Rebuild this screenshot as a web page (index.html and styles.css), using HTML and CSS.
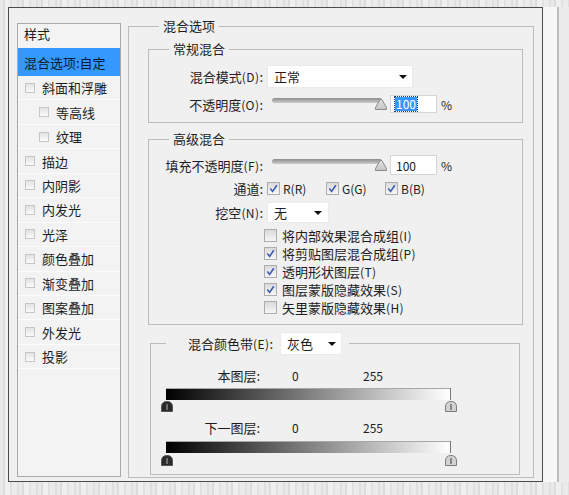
FILE: index.html
```html
<!DOCTYPE html>
<html lang="zh-CN">
<head>
<meta charset="utf-8">
<title>图层样式</title>
<link rel="stylesheet" href="styles.css">
</head>
<body>
<div class="screen">
  <div class="dialog">
    <ul class="styles-list">
      <li class="list-head">样式</li>
      <li class="list-item selected">混合选项:自定</li>
      <li class="list-item"><span class="lbox"></span>斜面和浮雕</li>
      <li class="list-item sub"><span class="lbox"></span>等高线</li>
      <li class="list-item sub"><span class="lbox"></span>纹理</li>
      <li class="list-item"><span class="lbox"></span>描边</li>
      <li class="list-item"><span class="lbox"></span>内阴影</li>
      <li class="list-item"><span class="lbox"></span>内发光</li>
      <li class="list-item"><span class="lbox"></span>光泽</li>
      <li class="list-item"><span class="lbox"></span>颜色叠加</li>
      <li class="list-item"><span class="lbox"></span>渐变叠加</li>
      <li class="list-item"><span class="lbox"></span>图案叠加</li>
      <li class="list-item"><span class="lbox"></span>外发光</li>
      <li class="list-item"><span class="lbox"></span>投影</li>
    </ul>

    <fieldset class="group outer">
      <legend>混合选项</legend>

      <fieldset class="group general">
        <legend>常规混合</legend>
        <div class="form-row row-mode">
          <label class="flabel">混合模式<span class="k">(D)</span>:</label>
          <div class="select sel-mode"><span>正常</span><i class="caret"></i></div>
        </div>
        <div class="form-row row-opacity">
          <label class="flabel">不透明度<span class="k">(O)</span>:</label>
          <div class="slider">
            <div class="track"></div>
            <svg class="thumb" width="12" height="12" viewBox="0 0 12 12"><defs><linearGradient id="tg1" x1="0" y1="0" x2="0" y2="1"><stop offset="0" stop-color="#e4e4e4"/><stop offset="1" stop-color="#c4c4c4"/></linearGradient></defs><path d="M0.5 11.5 L0.5 9.5 L5 1.8 Q6 0.4 7 1.8 L11.5 9.5 L11.5 11.5 Z" fill="url(#tg1)" stroke="#8a8a8a"/></svg>
          </div>
          <div class="num"><span class="hl">100</span></div>
          <span class="pct">%</span>
        </div>
      </fieldset>

      <fieldset class="group advanced">
        <legend>高级混合</legend>
        <div class="form-row row-fill">
          <label class="flabel">填充不透明度<span class="k">(F)</span>:</label>
          <div class="slider">
            <div class="track"></div>
            <svg class="thumb" width="12" height="12" viewBox="0 0 12 12"><path d="M0.5 11.5 L0.5 9.5 L5 1.8 Q6 0.4 7 1.8 L11.5 9.5 L11.5 11.5 Z" fill="url(#tg1)" stroke="#8a8a8a"/></svg>
          </div>
          <div class="num num-fill">100</div>
          <span class="pct">%</span>
        </div>
        <div class="form-row row-channels">
          <label class="flabel">通道:</label>
          <div class="chan"><span class="cb checked"><svg width="11" height="11" viewBox="0 0 11 11"><path d="M2.3 5.6 L4.6 8.4 L8.8 2.3" fill="none" stroke="#3d5cb4" stroke-width="1.6"/></svg></span><span class="latin">R(R)</span></div>
          <div class="chan"><span class="cb checked"><svg width="11" height="11" viewBox="0 0 11 11"><path d="M2.3 5.6 L4.6 8.4 L8.8 2.3" fill="none" stroke="#3d5cb4" stroke-width="1.6"/></svg></span><span class="latin">G(G)</span></div>
          <div class="chan"><span class="cb checked"><svg width="11" height="11" viewBox="0 0 11 11"><path d="M2.3 5.6 L4.6 8.4 L8.8 2.3" fill="none" stroke="#3d5cb4" stroke-width="1.6"/></svg></span><span class="latin">B(B)</span></div>
        </div>
        <div class="form-row row-knock">
          <label class="flabel">挖空<span class="k">(N)</span>:</label>
          <div class="select sel-knock"><span>无</span><i class="caret"></i></div>
        </div>
        <ul class="opts">
          <li class="opt"><span class="cb"></span>将内部效果混合成组<span class="k">(I)</span></li>
          <li class="opt"><span class="cb checked"><svg width="11" height="11" viewBox="0 0 11 11"><path d="M2.3 5.6 L4.6 8.4 L8.8 2.3" fill="none" stroke="#3d5cb4" stroke-width="1.6"/></svg></span>将剪贴图层混合成组<span class="k">(P)</span></li>
          <li class="opt"><span class="cb checked"><svg width="11" height="11" viewBox="0 0 11 11"><path d="M2.3 5.6 L4.6 8.4 L8.8 2.3" fill="none" stroke="#3d5cb4" stroke-width="1.6"/></svg></span>透明形状图层<span class="k">(T)</span></li>
          <li class="opt"><span class="cb checked"><svg width="11" height="11" viewBox="0 0 11 11"><path d="M2.3 5.6 L4.6 8.4 L8.8 2.3" fill="none" stroke="#3d5cb4" stroke-width="1.6"/></svg></span>图层蒙版隐藏效果<span class="k">(S)</span></li>
          <li class="opt"><span class="cb"></span>矢里蒙版隐藏效果<span class="k">(H)</span></li>
        </ul>
      </fieldset>

      <fieldset class="group band">
        <legend class="band-legend">
          <span class="band-label">混合颜色带<span class="k">(E)</span>:</span>
          <span class="select sel-band"><span>灰色</span><i class="caret"></i></span>
        </legend>
        <div class="band-row">
          <span class="blabel">本图层:</span>
          <span class="v0">0</span>
          <span class="v255">255</span>
        </div>
        <div class="ramp">
          <div class="bar"></div>
          <div class="stops">
            <svg width="12" height="11" viewBox="0 0 12 11"><path d="M0.5 10.5 L0.5 6 Q0.5 0.5 6 0.5 Q11.5 0.5 11.5 6 L11.5 10.5 Z" fill="#2a2a2a" stroke="#555"/><path d="M6 3 V9" stroke="#9a9a9a" stroke-width="1.2"/></svg>
            <svg width="12" height="11" viewBox="0 0 12 11"><path d="M0.5 10.5 L0.5 6 Q0.5 0.5 6 0.5 Q11.5 0.5 11.5 6 L11.5 10.5 Z" fill="#d2d2d2" stroke="#7d7d7d"/><path d="M6 3 V9" stroke="#555" stroke-width="1.2"/></svg>
          </div>
        </div>
        <div class="band-row row-under">
          <span class="blabel">下一图层:</span>
          <span class="v0">0</span>
          <span class="v255">255</span>
        </div>
        <div class="ramp ramp-under">
          <div class="bar"></div>
          <div class="stops">
            <svg width="12" height="11" viewBox="0 0 12 11"><path d="M0.5 10.5 L0.5 6 Q0.5 0.5 6 0.5 Q11.5 0.5 11.5 6 L11.5 10.5 Z" fill="#2a2a2a" stroke="#555"/><path d="M6 3 V9" stroke="#9a9a9a" stroke-width="1.2"/></svg>
            <svg width="12" height="11" viewBox="0 0 12 11"><path d="M0.5 10.5 L0.5 6 Q0.5 0.5 6 0.5 Q11.5 0.5 11.5 6 L11.5 10.5 Z" fill="#d2d2d2" stroke="#7d7d7d"/><path d="M6 3 V9" stroke="#555" stroke-width="1.2"/></svg>
          </div>
        </div>
      </fieldset>
    </fieldset>
  </div>
  <div class="side-strip"></div>
</div>
</body>
</html>
```

FILE: styles.css
```css
* { box-sizing: border-box; }

html, body { margin: 0; padding: 0; }

body {
  width: 569px;
  height: 495px;
  overflow: hidden;
  font-family: "Noto Sans CJK SC", "Noto Sans", sans-serif;
  font-size: 13px;
  color: #1d1d1d;
  background: repeating-linear-gradient(90deg,
    #e9e9e9 0 3px, #dcdcdc 3px 5px, #efefef 5px 10px,
    #e1e1e1 10px 12px, #ebebeb 12px 17px, #dfdfdf 17px 19px);
}

.screen {
  display: flex;
  padding-top: 7px;
}

.dialog {
  margin-left: 8px;
  width: 535px;
  height: 475px;
  border: 1px solid #4b4b4b;
  background: #f0f0f0;
  display: flex;
  align-items: flex-start;
  gap: 7px;
  padding: 10px 0 0 8px;
}

.side-strip {
  width: 26px;
  height: 475px;
  background: linear-gradient(90deg, #f7f7f7 0 14px, #bdbdbd 14px 16px, #ececec 16px);
}

/* left style list */
.styles-list {
  list-style: none;
  margin: 5px 0 0;
  padding: 0;
  width: 104px;
  height: 454px;
  border: 1px solid #a9a9a9;
  background: #f3f3f3;
}

.list-head {
  height: 24px;
  line-height: 20px;
  padding-left: 6px;
}

.list-item {
  height: 24.45px;
  display: flex;
  align-items: center;
  padding-left: 7px;
  border-bottom: 1px solid #fcfcfc;
  white-space: nowrap;
}

.list-item.selected {
  height: 28px;
  padding-left: 6px;
  background: #3399ff;
  color: #0f1a33;
  border-bottom: 0;
}

.list-item.sub { padding-left: 21px; }

.lbox {
  width: 10px;
  height: 10px;
  margin-right: 7px;
  border: 1px solid #c6c6c6;
  background: linear-gradient(#e2e2e2, #fbfbfb);
}

/* group boxes */
.group {
  margin: 0;
  border: 1px solid #bcbcbc;
  min-inline-size: 0;
}

.group > legend {
  padding: 0 4px;
  line-height: 16px;
}

.outer {
  width: 406px;
  padding: 7px 10px 2px 19px;
}

.outer > legend { margin-left: 11px; }

.general { padding: 8px 0 9px 0; }
.general > legend { margin-left: 20px; }

.advanced { margin-top: 8px; padding: 8px 0 8px 0; }
.advanced > legend { margin-left: 20px; }

.k {
  font-size: 12px;
  letter-spacing: 0.4px;
}

.form-row {
  display: flex;
  align-items: center;
  white-space: nowrap;
}

.flabel {
  width: 114px;
  margin-right: 4px;
  text-align: right;
}

.row-mode { height: 23px; }
.row-opacity { height: 18px; margin-top: 7px; }
.row-fill { height: 20px; }
.row-channels { height: 16px; margin-top: 5px; }
.row-knock { height: 21px; margin-top: 6px; }

.select {
  display: flex;
  align-items: center;
  justify-content: space-between;
  height: 100%;
  padding: 0 5px 0 6px;
  background: #ffffff;
  border: 1px solid #ebebeb;
}

.sel-mode { width: 146px; }
.sel-knock { width: 62px; padding-right: 6px; }

.caret {
  width: 0;
  height: 0;
  border-left: 4px solid transparent;
  border-right: 4px solid transparent;
  border-top: 4px solid #111;
}

.slider {
  position: relative;
  width: 115px;
  height: 12px;
  margin-left: 5px;
}

.track {
  height: 5px;
  width: 110px;
  border-radius: 3px;
  background: linear-gradient(#8c8c8c, #cdcdcd);
}

.thumb {
  position: absolute;
  top: 0;
  right: 0;
}

.num {
  display: flex;
  align-items: center;
  width: 47px;
  height: 18px;
  margin-left: 3px;
  padding-left: 4px;
  background: #ffffff;
  border: 1px solid #d6d6d6;
  font-size: 12px;
}

.num-fill { height: 20px; padding-left: 5px; }

.hl {
  background: #3399ff;
  color: #ffffff;
  line-height: 14px;
  padding: 0 1px;
  outline: 1px dotted #1f3f80;
}

.pct {
  margin-left: 4px;
  font-size: 12px;
}

.chan {
  display: flex;
  align-items: center;
  width: 59px;
}

.latin { font-size: 12px; }

.cb {
  display: inline-flex;
  width: 13px;
  height: 13px;
  flex: none;
  border: 1px solid #adadad;
  background: linear-gradient(#dadada, #f7f7f7);
  margin-right: 3px;
}

.opts {
  list-style: none;
  margin: 3px 0 0 115px;
  padding: 0;
}

.opt {
  display: flex;
  align-items: center;
  height: 18px;
  white-space: nowrap;
}

.opt .cb { margin-right: 5px; }

/* blend-if band */
.band {
  margin: 7px 3px 0 2px;
  padding: 12px 0 8px 0;
}

.band > .band-legend {
  display: flex;
  align-items: center;
  margin-left: 15px;
  padding: 0 7px 0 22px;
  line-height: 16px;
}

.sel-band {
  width: 62px;
  height: 23px;
  margin-left: 7px;
}

.band-row {
  display: flex;
  align-items: center;
  height: 16px;
  white-space: nowrap;
}

.row-under { margin-top: 7px; }

.blabel {
  width: 109px;
  text-align: right;
}

.v0 {
  width: 71px;
  margin-left: 32px;
  font-size: 12px;
}

.v255 { font-size: 12px; }

.ramp {
  width: 296px;
  margin: 5px 0 0 10px;
}

.ramp-under { margin-top: 6px; }

.bar {
  height: 12px;
  margin: 0 6px 0 5px;
  background: linear-gradient(90deg, #000000, #ffffff);
  box-shadow: inset 0 1px 0 #a8a8a8;
  border-right: 1px solid #777777;
}

.stops {
  display: flex;
  justify-content: space-between;
  height: 11px;
  margin-top: 1px;
}

.ramp-under .stops { margin-top: 2px; }
.stops svg { display: block; }
```
